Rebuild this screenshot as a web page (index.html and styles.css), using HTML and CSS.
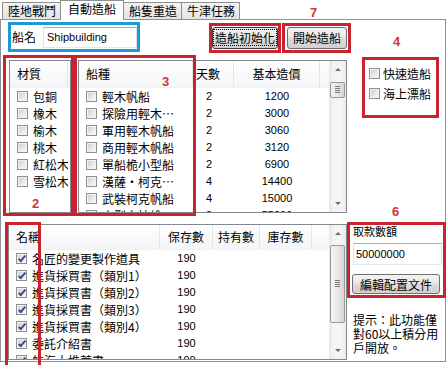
FILE: index.html
```html
<!DOCTYPE html>
<html lang="zh-Hant">

<head>
    <meta charset="UTF-8">
    <meta name="viewport" content="width=device-width, initial-scale=1.0">
    <title>自動造船</title>
    <link rel="stylesheet" href="styles.css">
</head>

<body>
    <div class="tabs">
        <div class="tab">陸地戰鬥</div>
        <div class="tab active">自動造船</div>
        <div class="tab">船隻重造</div>
        <div class="tab">牛津任務</div>
    </div>

    <div class="panel">
        <div class="top-row">
            <div class="name-box">
                <label for="ship-name">船名</label>
                <input type="text" id="ship-name" value="Shipbuilding">
            </div>
            <button class="btn btn-init"><span>造船初始化</span></button>
            <button class="btn btn-start">開始造船</button>
        </div>

        <div class="mid-row">
            <div class="list mat-list">
                <div class="list-body">
                    <div class="list-head"><span class="col col-mat">材質</span></div>
                    <div class="row"><span class="col col-mat name"><i class="cb"></i>包銅</span></div>
                    <div class="row"><span class="col col-mat name"><i class="cb"></i>橡木</span></div>
                    <div class="row"><span class="col col-mat name"><i class="cb"></i>榆木</span></div>
                    <div class="row"><span class="col col-mat name"><i class="cb"></i>桃木</span></div>
                    <div class="row"><span class="col col-mat name"><i class="cb"></i>紅松木</span></div>
                    <div class="row"><span class="col col-mat name"><i class="cb"></i>雪松木</span></div>
                </div>
            </div>

            <div class="list ship-list">
                <div class="list-body">
                    <div class="list-head">
                        <span class="col col-type">船種</span>
                        <span class="col col-days">天數</span>
                        <span class="col col-cost">基本造價</span>
                    </div>
                    <div class="row"><span class="col col-type name"><i class="cb"></i>輕木帆船</span><span class="col col-days num">2</span><span class="col col-cost num">1200</span></div>
                    <div class="row"><span class="col col-type name"><i class="cb"></i>探險用輕木…</span><span class="col col-days num">2</span><span class="col col-cost num">3000</span></div>
                    <div class="row"><span class="col col-type name"><i class="cb"></i>軍用輕木帆船</span><span class="col col-days num">2</span><span class="col col-cost num">3060</span></div>
                    <div class="row"><span class="col col-type name"><i class="cb"></i>商用輕木帆船</span><span class="col col-days num">2</span><span class="col col-cost num">3120</span></div>
                    <div class="row"><span class="col col-type name"><i class="cb"></i>單船桅小型船</span><span class="col col-days num">2</span><span class="col col-cost num">6900</span></div>
                    <div class="row"><span class="col col-type name"><i class="cb"></i>漢薩・柯克…</span><span class="col col-days num">4</span><span class="col col-cost num">14400</span></div>
                    <div class="row"><span class="col col-type name"><i class="cb"></i>武裝柯克帆船</span><span class="col col-days num">4</span><span class="col col-cost num">15000</span></div>
                    <div class="row"><span class="col col-type name"><i class="cb"></i>小型卡拉維…</span><span class="col col-days num">8</span><span class="col col-cost num">55200</span></div>
                </div>
                <div class="vscroll">
                    <div class="arrow up"></div>
                    <div class="thumb thumb-ship"></div>
                    <div class="spacer"></div>
                    <div class="arrow down"></div>
                </div>
            </div>

            <div class="options">
                <label class="opt"><i class="cb"></i>快速造船</label>
                <label class="opt"><i class="cb"></i>海上漂船</label>
            </div>
        </div>

        <div class="bottom-row">
            <div class="list item-list">
                <div class="list-body">
                    <div class="list-head">
                        <span class="col col-name">名稱</span>
                        <span class="col col-qty">保存數</span>
                        <span class="col col-have">持有數</span>
                        <span class="col col-stock">庫存數</span>
                    </div>
                    <div class="row"><span class="col col-name name"><i class="cb on"></i>名匠的變更製作道具</span><span class="col col-qty num">190</span></div>
                    <div class="row"><span class="col col-name name"><i class="cb on"></i>進貨採買書（類別1）</span><span class="col col-qty num">190</span></div>
                    <div class="row"><span class="col col-name name"><i class="cb on"></i>進貨採買書（類別2）</span><span class="col col-qty num">190</span></div>
                    <div class="row"><span class="col col-name name"><i class="cb on"></i>進貨採買書（類別3）</span><span class="col col-qty num">190</span></div>
                    <div class="row"><span class="col col-name name"><i class="cb on"></i>進貨採買書（類別4）</span><span class="col col-qty num">190</span></div>
                    <div class="row"><span class="col col-name name"><i class="cb on"></i>委託介紹書</span><span class="col col-qty num">190</span></div>
                    <div class="row"><span class="col col-name name"><i class="cb on"></i>航海士推薦書</span><span class="col col-qty num">190</span></div>
                </div>
                <div class="vscroll">
                    <div class="arrow up"></div>
                    <div class="thumb thumb-item"></div>
                    <div class="spacer"></div>
                    <div class="arrow down"></div>
                </div>
            </div>

            <div class="side">
                <div class="side-label">取款數額</div>
                <input type="text" class="side-input" value="50000000">
                <button class="btn btn-edit">編輯配置文件</button>
                <p class="hint">提示：此功能僅<br>對60以上積分用<br>戶開放。</p>
            </div>
        </div>
    </div>

    <!-- annotation marks -->
    <div class="mark box-2"></div>
    <div class="mark box-3"></div>
    <div class="mark box-7a"></div>
    <div class="mark box-7b"></div>
    <div class="mark box-4"></div>
    <div class="mark box-6"></div>
    <div class="mark box-5"></div>
    <span class="tag tag-7">7</span>
    <span class="tag tag-4">4</span>
    <span class="tag tag-3">3</span>
    <span class="tag tag-2">2</span>
    <span class="tag tag-6">6</span>
</body>

</html>
```

FILE: styles.css
```css
body {
    margin: 0;
    padding: 0;
    width: 447px;
    height: 365px;
    overflow: hidden;
    position: relative;
    background: #fff;
    color: #000;
    font-family: "Noto Sans CJK TC", sans-serif;
    font-size: 12px;
}

/* tabs */
.tabs {
    display: flex;
    align-items: flex-end;
    height: 19px;
    padding-left: 2px;
    position: relative;
    z-index: 1;
}

.tab {
    height: 17px;
    line-height: 16px;
    padding: 0 4px 0 5px;
    border: 1px solid #8e8f8f;
    border-bottom: none;
    border-right: none;
    box-sizing: border-box;
    background: linear-gradient(#f3f3f3, #e3e3e3);
}

.tab:last-child {
    border-right: 1px solid #8e8f8f;
}

.tab.active {
    height: 20px;
    margin-bottom: -1px;
    line-height: 15px;
    padding: 0 7px;
    border-right: 1px solid #8e8f8f;
    background: #fff;
}

.tab.active + .tab {
    border-left: none;
}

/* panel */
.panel {
    width: 446px;
    height: 343px;
    border: 1px solid #8d9096;
    box-sizing: border-box;
    background: #fff;
}

.top-row {
    display: flex;
    align-items: flex-start;
    height: 40px;
    padding: 2px 0 0 7px;
    box-sizing: border-box;
}

.name-box {
    display: flex;
    align-items: center;
    width: 132px;
    height: 30px;
    padding-left: 1px;
    border: 3px solid #1d9ad6;
    box-sizing: border-box;
}

.name-box label {
    width: 24px;
    margin-right: 7px;
    line-height: 14px;
}

.name-box input,
.side-input {
    height: 21px;
    border: 1px solid #abadb3;
    border-color: #abadb3 #dbdfe6 #e3e9ef #e2e3ea;
    box-sizing: border-box;
    padding: 0 0 0 3px;
    font-family: "Liberation Sans", sans-serif;
    font-size: 11px;
    color: #000;
    outline: none;
}

.name-box input {
    width: 94px;
}

.btn {
    height: 22px;
    padding: 0;
    border: 1px solid #707070;
    border-radius: 3px;
    box-sizing: border-box;
    background: linear-gradient(#f2f2f2 0%, #ebebeb 45%, #dddddd 50%, #cfcfcf 100%);
    font-family: "Noto Sans CJK TC", sans-serif;
    font-size: 12px;
    line-height: 18px;
    color: #000;
}

.btn-init {
    width: 66px;
    margin: 5px 0 0 72px;
    border-color: #3c3c3c;
}

.btn-init span {
    display: inline-block;
    padding: 0 1px;
    line-height: 15px;
    outline: 1px dotted #000;
}

.btn-start {
    width: 60px;
    margin: 5px 0 0 9px;
}

/* list views */
.mid-row {
    display: flex;
    height: 153px;
}

.list {
    display: flex;
    height: 100%;
    border: 1px solid #828790;
    box-sizing: border-box;
    background: #fff;
    overflow: hidden;
}

.list-body {
    flex: 1;
    min-width: 0;
    overflow: hidden;
}

.list-head {
    display: flex;
    height: 27px;
    background: linear-gradient(#ffffff, #f4f5f7);
    border-bottom: 1px solid #f0f0f0;
    box-sizing: border-box;
}

.list-head .col {
    line-height: 26px;
    border-right: 1px solid #e3e4e6;
    text-align: center;
}

.list-head .col:first-child {
    text-align: left;
    padding-left: 7px;
}

.row {
    display: flex;
    height: 17px;
    line-height: 17px;
    white-space: nowrap;
}

.col {
    flex: none;
    overflow: hidden;
    white-space: nowrap;
    box-sizing: border-box;
}

.col.name {
    display: flex;
    align-items: center;
    padding-left: 7px;
}

.col.num {
    text-align: center;
    font-family: "Liberation Sans", sans-serif;
    font-size: 11px;
}

.mat-list {
    width: 62px;
    margin-left: 8px;
}

.col-mat { width: 58px; }

.ship-list {
    width: 269px;
    margin-left: 7px;
}

.col-type { width: 114px; }
.col-days { width: 41px; }
.col-cost { width: 86px; }

.list-head .col-days {
    text-align: left;
    padding-left: 3px;
}

.row .col-days {
    text-align: left;
    padding-left: 13px;
}

.col-name { width: 151px; }
.col-qty { width: 53px; }
.col-have { width: 47px; }
.col-stock { width: 52px; }

/* checkboxes */
.cb {
    flex: none;
    display: inline-block;
    position: relative;
    width: 11px;
    height: 11px;
    margin-right: 5px;
    border: 1px solid #8f8f8f;
    box-sizing: border-box;
    background: linear-gradient(135deg, #c9cbcf, #eeeff0 70%, #f8f8f8);
    box-shadow: inset 0 0 0 1px #f3f3f3;
}

.cb.on::after {
    content: "";
    position: absolute;
    left: 3px;
    top: 0;
    width: 2px;
    height: 6px;
    border: solid #3a4f8f;
    border-width: 0 2px 2px 0;
    transform: rotate(40deg);
}

/* scrollbars */
.vscroll {
    flex: none;
    display: flex;
    flex-direction: column;
    width: 17px;
    background: linear-gradient(90deg, #e6e6e6, #f4f4f4 25%, #f4f4f4 75%, #e9e9e9);
}

.arrow {
    flex: none;
    display: flex;
    align-items: center;
    justify-content: center;
    height: 17px;
}

.arrow::before {
    content: "";
    border-left: 3px solid transparent;
    border-right: 3px solid transparent;
}

.arrow.up::before { border-bottom: 3px solid #707070; }
.arrow.down::before { border-top: 3px solid #707070; }

.spacer { flex: 1; }

.thumb {
    flex: none;
    position: relative;
    margin: 0 1px;
    border: 1px solid #999;
    border-radius: 2px;
    box-sizing: border-box;
    background: linear-gradient(90deg, #f3f3f3, #e8e8e8 50%, #d4d4d4);
}

.thumb::after {
    content: "";
    position: absolute;
    left: 4px;
    right: 4px;
    top: 50%;
    height: 7px;
    margin-top: -4px;
    background: repeating-linear-gradient(#7a7a7a 0 1px, transparent 1px 2px);
}

.thumb-ship {
    height: 16px;
    margin-top: 4px;
}

.thumb-item {
    height: 78px;
    margin-top: 3px;
}

/* options */
.options {
    margin-left: 22px;
    padding-top: 8px;
}

.opt {
    display: flex;
    align-items: center;
    height: 11px;
    margin-bottom: 9px;
    line-height: 14px;
    white-space: nowrap;
}

.opt .cb { margin-right: 3px; }

/* bottom */
.bottom-row {
    display: flex;
    height: 136px;
    margin-top: 11px;
}

.item-list {
    width: 339px;
    margin-left: 7px;
}

.item-list .list-head { height: 25px; }
.item-list .list-head .col { line-height: 24px; }

.side {
    width: 90px;
    margin-left: 5px;
}

.side-label {
    padding-left: 1px;
    font-size: 11px;
    line-height: 14px;
}

.side-input {
    display: block;
    width: 89px;
    height: 22px;
    margin: 5px 0 0 1px;
    padding-left: 2px;
}

.btn-edit {
    display: block;
    width: 88px;
    height: 20px;
    margin-top: 9px;
    line-height: 17px;
}

.hint {
    margin: 19px 0 0 1px;
    line-height: 14px;
}

/* red annotation marks over the screenshot */
.mark {
    position: absolute;
    border: 3px solid #c9242e;
    box-sizing: border-box;
}

.box-2 { left: 3px; top: 55px; width: 71px; height: 161px; }
.box-3 { left: 74px; top: 55px; width: 122px; height: 161px; }
.box-7a { left: 209px; top: 23px; width: 72px; height: 30px; }
.box-7b { left: 282px; top: 23px; width: 69px; height: 30px; }
.box-4 { left: 362px; top: 57px; width: 77px; height: 61px; }
.box-6 { left: 347px; top: 222px; width: 99px; height: 76px; }
.box-5 { left: 5px; top: 222px; width: 36px; height: 150px; }

.tag {
    position: absolute;
    font-family: "Liberation Sans", sans-serif;
    font-weight: bold;
    font-size: 13px;
    line-height: 13px;
    color: #d2343c;
}

.tag-7 { left: 310px; top: 6px; }
.tag-4 { left: 393px; top: 35px; }
.tag-3 { left: 162px; top: 75px; }
.tag-2 { left: 32px; top: 197px; }
.tag-6 { left: 392px; top: 205px; }
```
